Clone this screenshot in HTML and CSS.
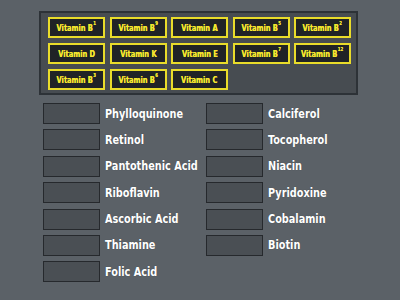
FILE: index.html
```html
<!DOCTYPE html>
<html>
<head>
<meta charset="utf-8">
<link rel="stylesheet" href="styles.css">
</head>
<body>
<div class="panel">
  <div class="tile"><span class="tt">Vitamin B<sup>1</sup></span></div>
  <div class="tile"><span class="tt">Vitamin B<sup>9</sup></span></div>
  <div class="tile"><span class="tt">Vitamin A</span></div>
  <div class="tile"><span class="tt">Vitamin B<sup>5</sup></span></div>
  <div class="tile"><span class="tt">Vitamin B<sup>2</sup></span></div>
  <div class="tile"><span class="tt">Vitamin D</span></div>
  <div class="tile"><span class="tt">Vitamin K</span></div>
  <div class="tile"><span class="tt">Vitamin E</span></div>
  <div class="tile"><span class="tt">Vitamin B<sup>7</sup></span></div>
  <div class="tile"><span class="tt">Vitamin B<sup>12</sup></span></div>
  <div class="tile"><span class="tt">Vitamin B<sup>3</sup></span></div>
  <div class="tile"><span class="tt">Vitamin B<sup>6</sup></span></div>
  <div class="tile"><span class="tt">Vitamin C</span></div>
</div>
<div class="targets">
  <div class="col">
    <div class="row"><div class="box"></div><span class="label">Phylloquinone</span></div>
    <div class="row"><div class="box"></div><span class="label">Retinol</span></div>
    <div class="row"><div class="box"></div><span class="label">Pantothenic Acid</span></div>
    <div class="row"><div class="box"></div><span class="label">Riboflavin</span></div>
    <div class="row"><div class="box"></div><span class="label">Ascorbic Acid</span></div>
    <div class="row"><div class="box"></div><span class="label">Thiamine</span></div>
    <div class="row"><div class="box"></div><span class="label">Folic Acid</span></div>
  </div>
  <div class="col">
    <div class="row"><div class="box"></div><span class="label">Calciferol</span></div>
    <div class="row"><div class="box"></div><span class="label">Tocopherol</span></div>
    <div class="row"><div class="box"></div><span class="label">Niacin</span></div>
    <div class="row"><div class="box"></div><span class="label">Pyridoxine</span></div>
    <div class="row"><div class="box"></div><span class="label">Cobalamin</span></div>
    <div class="row"><div class="box"></div><span class="label">Biotin</span></div>
  </div>
</div>
</body>
</html>
```
FILE: styles.css
```css
html, body {
  margin: 0;
  padding: 0;
  background: #5b6167;
  width: 400px;
  height: 300px;
  overflow: hidden;
  font-family: "DejaVu Sans Condensed", "DejaVu Sans", sans-serif;
  font-weight: bold;
}

.panel {
  box-sizing: border-box;
  margin: 11px 0 0 39px;
  width: 319px;
  height: 84px;
  border: 2px solid #2d3237;
  background: #474c51;
  padding: 4px 5px 3px 7px;
  display: grid;
  grid-template-columns: repeat(5, 57px);
  grid-auto-rows: 21px;
  column-gap: 4.5px;
  row-gap: 5px;
}

.tile {
  box-sizing: border-box;
  border: 2px solid #e9dc2a;
  background: #202326;
  color: #f4e62e;
  display: flex;
  align-items: center;
  justify-content: center;
  white-space: nowrap;
  overflow: hidden;
}

.tt {
  display: inline-block;
  font-size: 9.5px;
  transform: scaleX(0.78);
  text-shadow: 0 0 0.6px #f4e62e;
}

.tt sup {
  font-size: 5.5px;
  line-height: 0;
  vertical-align: top;
  position: relative;
  top: 1px;
  margin-left: 0.5px;
}

.targets {
  display: flex;
  margin: 8px 0 0 43px;
}

.col {
  width: 163px;
  display: flex;
  flex-direction: column;
  row-gap: 5.4px;
}

.row {
  display: flex;
  align-items: center;
  height: 21px;
  gap: 4.5px;
}

.box {
  box-sizing: border-box;
  width: 57px;
  height: 21px;
  border: 1.5px solid #26292d;
  background: #4a4f54;
  flex: none;
}

.label {
  display: inline-block;
  color: #ffffff;
  font-size: 12px;
  transform: scaleX(0.9);
  transform-origin: left center;
  text-shadow: 0 0 1px rgba(0, 0, 0, 0.3);
  white-space: nowrap;
}
```
